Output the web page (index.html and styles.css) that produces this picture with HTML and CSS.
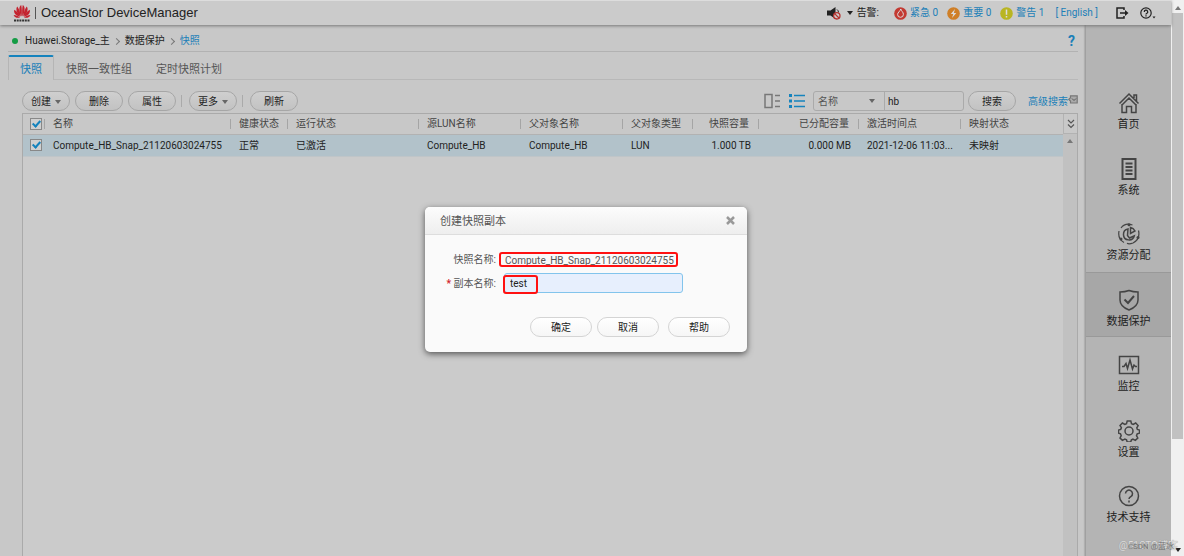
FILE: index.html
```html
<!DOCTYPE html>
<html lang="zh-CN">
<head>
<meta charset="utf-8">
<title>OceanStor DeviceManager</title>
<link rel="stylesheet" href="styles.css">
</head>
<body>
<div class="window">
  <div class="app">
    <header class="topbar">
      <svg class="logo" viewBox="0 0 18 18" aria-label="HUAWEI">
        <g fill="#c4232f">
          <path d="M8.6 12.5C5.8 8 5.6 2.4 8.2 1c.7 2.600 .9 8 .4 11.500z"/>
          <path d="M9.400 12.500C12.200 8 12.400 2.400 9.800 1c-.7 2.600-.9 8-.4 11.500z"/>
          <path d="M7.800 12.500C3.600 9.600 2.300 5 4.300 2.600 6.300 5.500 7.500 9 7.800 12.500z"/>
          <path d="M10.200 12.500c4.200-2.900 5.500-7.500 3.500-9.900-2 2.900-3.200 6.400-3.500 9.900z"/>
          <path d="M7.200 12.800C3 12 .4 9 1.200 5.800c2.700 1.600 4.800 4 6 7z"/>
          <path d="M10.800 12.800c4.200-.8 6.800-3.800 6-7-2.700 1.600-4.800 4-6 7z"/>
          <path d="M7 13.500c-3 .9-5.600 0-6.400-2.500 2.400.2 4.600 1 6.400 2.500z"/>
          <path d="M11 13.500c3 .9 5.600 0 6.400-2.500-2.400.2-4.600 1-6.400 2.500z"/>
        </g>
        <path d="M1 16.500h16" stroke="#333" stroke-width="2" stroke-dasharray="2 .7"/>
      </svg>
      <h1 class="brand">OceanStor DeviceManager</h1>
      <div class="alarms">
        <svg class="i-sound" viewBox="0 0 14 14"><path d="M0 4.500h3.500L8.500 1v12L3.500 9.500H0z" fill="#222"/><path d="M10 3.500q1.500 1 1.500 3" fill="none" stroke="#222"/><circle cx="9.800" cy="9.800" r="3.200" fill="#ccc" stroke="#b5332f" stroke-width="1.300"/><path d="M7.600 7.600l4.400 4.400" stroke="#b5332f" stroke-width="1.300"/></svg>
        <span class="caret dark"></span>
        <span class="alarm-label">告警:</span>
        <a class="alarm" href="#"><svg viewBox="0 0 13 13"><circle cx="6.500" cy="6.500" r="6.300" fill="#c33a32"/><path d="M6.800 2c.3 2 2.600 3 2.600 5.400a2.900 2.900 0 0 1-5.800 0C3.600 5.500 6 4.500 6.800 2z" fill="none" stroke="#ddd"/></svg>紧急 0</a>
        <a class="alarm" href="#"><svg viewBox="0 0 13 13"><circle cx="6.500" cy="6.500" r="6.300" fill="#cf7f27"/><path d="M8 2L3.800 7h2.500L5 11l4.300-5H6.800z" fill="#ddd"/></svg>重要 0</a>
        <a class="alarm" href="#"><svg viewBox="0 0 13 13"><circle cx="6.500" cy="6.500" r="6.300" fill="#b9b522"/><path d="M6.500 2.500v5.300M6.500 9v1.500" stroke="#ddd" stroke-width="1.500"/></svg>警告 1</a>
        <a class="lang" href="#">[ English ]</a>
        <button class="icon-btn" aria-label="退出"><svg viewBox="0 0 13 12"><path d="M8 3V1H1v10h7V9M4 6h7" fill="none" stroke="#222" stroke-width="1.500"/><path d="M9 3l3.500 3L9 9z" fill="#222"/></svg></button>
        <button class="icon-btn help-btn" aria-label="帮助"><svg viewBox="0 0 16 12"><circle cx="6" cy="6" r="5.200" fill="none" stroke="#222" stroke-width="1.200"/><path d="M4.300 5a1.700 1.700 0 1 1 2.600 1.300Q6 6.800 6 7.600M6 8.300v1.300" fill="none" stroke="#222" stroke-width="1.300"/><path d="M12.500 9.500h3L14 11.500z" fill="#222"/></svg></button>
      </div>
    </header>
    <div class="body">
      <main class="main">
        <nav class="crumbs">
          <span class="dot"></span><span>Huawei.Storage_主</span><i class="chev"></i><span>数据保护</span><i class="chev"></i><a href="#">快照</a>
          <a class="help" href="#">?</a>
        </nav>
        <nav class="tabs"><a class="tab active" href="#">快照</a><a class="tab" href="#">快照一致性组</a><a class="tab" href="#">定时快照计划</a></nav>
        <div class="toolbar">
          <button class="pill">创建<span class="caret"></span></button>
          <button class="pill">删除</button>
          <button class="pill">属性</button>
          <span class="sep"></span>
          <button class="pill">更多<span class="caret"></span></button>
          <span class="sep"></span>
          <button class="pill">刷新</button>
          <div class="search">
            <button class="icon-btn" aria-label="分栏"><svg class="i-view" viewBox="0 0 16 16"><path d="M1 1.500h7v13H1zM11 2.500h5M11 8h5M11 13.500h5" fill="none" stroke="#777" stroke-width="1.500"/></svg></button>
            <button class="icon-btn list" aria-label="列表"><svg class="i-view" viewBox="0 0 16 16"><path d="M0 2.500h3M0 8h3M0 13.500h3" stroke="#1583bd" stroke-width="3"/><path d="M5 2.500h11M5 8h11M5 13.500h11" stroke="#1583bd" stroke-width="1.500"/></svg></button>
            <div class="combo"><select aria-label="搜索字段"><option>名称</option></select><span class="caret"></span><input type="text" value="hb" aria-label="关键字"></div>
            <button class="pill">搜索</button>
            <a class="adv" href="#">高级搜索<svg viewBox="0 0 10 9"><path d="M2.500 .8h6.700v7.200H2.500V6L.7 4.400l1.800-1.600z" fill="#aaa" stroke="#777" stroke-width="1.200"/><path d="M4 3.500l2 2 2-2" fill="none" stroke="#555"/></svg></a>
          </div>
        </div>
        <div class="grid">
          <table>
            <colgroup><col class="c-check"><col class="c-name"><col class="c-health"><col class="c-run"><col class="c-lun"><col class="c-lun"><col class="c-type"><col class="c-cap"><col class="c-used"><col class="c-time"><col class="c-map"></colgroup>
            <thead><tr><th><input type="checkbox" checked aria-label="全选"></th><th>名称</th><th>健康状态</th><th>运行状态</th><th>源LUN名称</th><th>父对象名称</th><th>父对象类型</th><th class="num">快照容量</th><th class="num">已分配容量</th><th>激活时间点</th><th>映射状态</th></tr></thead>
            <tbody><tr><td><input type="checkbox" checked aria-label="选择"></td><td>Compute_HB_Snap_21120603024755</td><td>正常</td><td>已激活</td><td>Compute_HB</td><td>Compute_HB</td><td>LUN</td><td class="num">1.000 TB</td><td class="num">0.000 MB</td><td>2021-12-06 11:03...</td><td>未映射</td></tr></tbody>
          </table>
          <div class="gutter"><button class="cols icon-btn" aria-label="选择列"><svg viewBox="0 0 8 10"><path d="M1 1l3 3 3-3M1 5.500l3 3 3-3" fill="none" stroke="#555" stroke-width="1.200"/></svg></button><span class="caret up"></span></div>
        </div>
      </main>
      <nav class="side">
        <a class="item" href="#"><svg viewBox="0 0 22 22"><path d="M1.500 11.500L11 2l9.500 9.500M16 6V3h2.500v6M4 12v8.500h4.500v-6h5v6H18V12M4 13l7-7 7 7" /></svg>首页</a>
        <a class="item" href="#"><svg viewBox="0 0 22 22"><path d="M4.500 1h13v20h-13zM7.500 5.500h7M7.500 9h7M7.500 12.500h7M7.500 16h7" stroke-width="2"/></svg>系统</a>
        <a class="item" href="#"><svg viewBox="0 0 22 22"><path d="M10 6a5.500 5.500 0 1 0 6.300 6.800L11.500 15 9.500 12.500z M12.500 4.500v6l4.500-2.500q-1.500-3-4.500-3.500z"/><path d="M14.500 2Q7-.5 3 5M1 8q-1.500 8 5 11.500M20.500 7.500q2 8.500-5.500 12.500-4 1.500-6 .3" stroke-width="1.200"/><g fill="#444" stroke="none"><circle cx="11" cy="1.800" r="1.500"/><circle cx="3" cy="16" r="1.500"/><circle cx="20" cy="14.500" r="1.500"/></g></svg>资源分配</a>
        <a class="item active" href="#"><svg viewBox="0 0 22 22"><path d="M11 1.500Q15 3 20 3v8q0 6.500-9 10Q2 17.500 2 11V3q5 0 9-1.500z"/><path d="M6.500 10.500l3.500 3.500 6-7" stroke-width="2"/></svg>数据保护</a>
        <a class="item" href="#"><svg viewBox="0 0 22 22"><path d="M1.500 2.500h19v17h-19zM4 12.500h2l2-3 1.500 5L12 6l2.500 9 1.500-4 1.500 1.500H19"/></svg>监控</a>
        <a class="item" href="#"><svg viewBox="0 0 22 22"><circle cx="11" cy="11" r="4"/><path d="M9.200 1h3.600l.7 2.600 1.700.8 2.500-1.400 2.400 2.500-1.300 2.400.6 1.600 2.100.6v3l-2.300.8-.7 1.700 1.300 2.400-2.500 2.400-2.400-1.200-1.500.7-.7 2.100H9.200l-.7-2.200-1.600-.7-2.500 1.300L2 18l1.200-2.400-.7-1.700-2-.7v-3.100l2.200-.7.7-1.700L2 5.500 4.400 3l2.400 1.400 1.700-.8z"/></svg>设置</a>
        <a class="item" href="#"><svg viewBox="0 0 22 22"><circle cx="11" cy="11" r="9.500"/><path d="M7.500 8.500a3.500 3.500 0 1 1 5.500 3Q11 12.500 11 14M11 15.500v2"/></svg>技术支持</a>
      </nav>
    </div>
  </div>
  <div class="scroll"><span class="caret up"></span><div class="thumb"></div><span class="caret dark"></span></div>
</div>
<div class="watermark">@51CTO博客</div>
<div class="watermark second">CSDN @蓝冰</div>
<div class="overlay">
  <form class="dialog" role="dialog" aria-labelledby="dlg-title">
    <div class="dlg-head"><h2 id="dlg-title">创建快照副本</h2><button type="button" class="icon-btn" aria-label="关闭"><svg viewBox="0 0 9 9"><path d="M1 1l7 7M8 1L1 8" stroke="#999" stroke-width="2.500"/></svg></button></div>
    <div class="dlg-body">
      <div class="row"><span class="lbl">快照名称:</span><div class="field"><output class="mark snap">Compute_HB_Snap_21120603024755</output></div></div>
      <div class="row second"><label class="lbl" for="copy"><b>*</b> 副本名称:</label><div class="field copy"><input id="copy" type="text" value="test"><span class="mark ring"></span></div></div>
    </div>
    <div class="actions"><button type="button" class="pill">确定</button><button type="button" class="pill">取消</button><button type="button" class="pill last">帮助</button></div>
  </form>
</div>
</body>
</html>
```
FILE: styles.css
```css
* { box-sizing: border-box; }
body { margin: 0; font: 10px/14px Roboto, "Noto Sans CJK SC", sans-serif; color: #222; background: #c8c8c8; overflow: hidden; }
a { color: #1b7fb8; text-decoration: none; }
h1, h2 { margin: 0; font-weight: 400; }
button, input, select { font: inherit; color: inherit; }
.window { display: flex; height: 100vh; }
.app { flex: 1; min-width: 0; display: flex; flex-direction: column; }
.topbar { display: flex; align-items: center; height: 25px; padding: 0 15px 0 13px; background: #cbcbcb; border-top: 1px solid #ddd; box-shadow: 0 1px 3px #777; position: relative; }
.logo { width: 18px; height: 18px; }
.brand { margin-left: 4px; padding-left: 5px; border-left: 1px solid #555; font: 13px/12px "Liberation Sans", sans-serif; color: #222; }
.alarms { margin-left: auto; display: flex; align-items: center; }
.i-sound { width: 14px; height: 14px; margin-right: 6px; }
.caret { display: inline-block; width: 0; height: 0; border: 3px solid transparent; border-top: 4px solid #666; border-bottom: 0; }
.caret.dark { border-top-color: #222; }
.caret.up { border-top: 0; border-bottom: 4px solid #777; }
.alarm-label { margin: 0 15px 0 4px; }
.alarm { display: flex; align-items: center; gap: 3px; margin-right: 9px; }
.alarm svg { width: 13px; height: 13px; }
.lang { margin: 0 18px 0 2px; }
.icon-btn { display: flex; padding: 0; border: 0; background: none; }
.icon-btn svg { width: 13px; height: 12px; }
.help-btn { margin-left: 11px; }
.help-btn svg { width: 16px; }
.body { flex: 1; display: flex; min-height: 0; }
.main { flex: 1; min-width: 0; padding: 0 7px 0 8px; display: flex; flex-direction: column; }
.crumbs { display: flex; align-items: center; height: 27px; padding: 6px 3px 0 4px; border-bottom: 1px solid #b2b2b2; }
.dot { width: 6px; height: 6px; border-radius: 50%; background: #149c45; margin-right: 7px; }
.chev { width: 5px; height: 5px; margin: 0 6px 0 4px; border: solid #777; border-width: 1px 1px 0 0; transform: rotate(45deg); }
.help { margin-left: auto; font-size: 14px; font-weight: 700; }
.tabs { display: flex; margin-top: 3px; height: 25px; border-bottom: 1px solid #b8b8b8; font-size: 11px; line-height: 30px; }
.tab { padding: 0 12px; color: #555; }
.tab.active { height: 25px; padding: 0 11px; border: 1px solid #b5b5b5; border-top: 2px solid #1583bd; border-bottom: 0; border-radius: 2px 2px 0 0; color: #1b7fb8; background: #c8c8c8; line-height: 26px; }
.toolbar { display: flex; align-items: center; height: 32px; padding: 10px 0 0 14px; }
.pill { width: 48px; height: 20px; margin-right: 5px; padding: 1px 0 0; border: 1px solid #a6a6a6; border-radius: 10px; background: linear-gradient(#cfcfcf, #c2c2c2); line-height: 18px; }
.pill .caret { margin: 0 0 1px 4px; }
.sep { width: 1px; height: 12px; background: #aaa; margin: 0 7px 0 0; }
.search { margin-left: auto; display: flex; align-items: center; }
.i-view.i-view { width: 16px; height: 16px; }
.list { margin: 0 8px 0 9px; }
.combo { position: relative; display: flex; width: 151px; height: 20px; margin-right: 4px; border: 1px solid #aaa; border-radius: 3px; }
.combo select { appearance: none; width: 70px; padding: 1px 4px 0; border: 0; background: none; color: #555; }
.combo .caret { position: absolute; left: 55px; top: 7px; }
.combo input { flex: 1; min-width: 0; border: 0; border-left: 1px solid #aaa; background: none; padding: 1px 3px 0; }
.adv { display: flex; align-items: center; margin-left: 7px; padding-top: 1px; }
.adv svg { width: 10px; height: 9px; margin-top: -4px; }
.grid { flex: 1; margin: 1px 0 0 14px; display: flex; border: solid #aaa; border-width: 1px 1px 0; background: #cbcbcb; }
table { flex: 1; min-width: 0; width: 100%; table-layout: fixed; border-collapse: collapse; align-self: flex-start; }
th, td { padding: 1px 0 0 8px; text-align: left; font-weight: 400; white-space: nowrap; overflow: hidden; }
th { height: 20px; color: #444; background: linear-gradient(90deg, #a5a5a5, #a5a5a5) right center / 1px 10px no-repeat; }
th:last-child { background: none; }
thead tr { border-bottom: 1px solid #b2b2b2; background: #c8c8c8; }
td { height: 22px; background: #b2c2ca; }
tbody tr { border-bottom: 1px solid #bfc5c8; }
.num { text-align: right; padding-right: 10px; }
td.num { padding-right: 8px; }
th:first-child, td:first-child { padding: 0 0 0 7px; }
[type=checkbox] { appearance: none; display: block; width: 12px; height: 12px; margin: 0; border: 1px solid #888; background: #d0d0d0; }
[type=checkbox]:checked::after { content: ""; display: block; width: 5px; height: 8px; margin: 0 0 0 3px; border: solid #1583bd; border-width: 0 2px 2px 0; box-sizing: border-box; transform: rotate(42deg); }
.c-check { width: 22px; } .c-name { width: 186px; } .c-health { width: 57px; } .c-run { width: 131px; } .c-lun { width: 102px; } .c-type { width: 70px; } .c-cap { width: 66px; } .c-used { width: 100px; } .c-time { width: 102px; }
.gutter { width: 14px; background: #c1c1c1; display: flex; flex-direction: column; align-items: center; gap: 5px; }
.cols { width: 14px; height: 20px; align-items: center; justify-content: center; border: solid #b2b2b2; border-width: 0 0 1px 1px; background: #c8c8c8; }
.cols svg { width: 8px; height: 10px; }
.side { width: 86px; display: flex; flex-direction: column; padding: 50px 0 22px; background: #b4b4b4; border-left: 1px solid #a0a0a0; box-shadow: -1px 0 1px #b0b0b0; }
.item { flex: 1; display: flex; flex-direction: column; align-items: center; gap: 2px; padding-top: 16px; font-size: 11px; line-height: 18px; color: #222; border: solid transparent; border-width: 1px 0; }
.item svg { width: 22px; height: 22px; fill: none; stroke: #444; stroke-width: 1.500; }
.item.active { background: #a7a7a7; border-color: #999; }
.scroll { width: 13px; background: #f0f0f0; display: flex; flex-direction: column; align-items: center; padding: 6px 0 4px; }
.thumb { width: 11px; height: 426px; margin: 3px 0 auto; background: #c1c1c1; }
.watermark { position: absolute; right: 6px; bottom: 3px; color: #dedede; font-size: 10px; text-shadow: 0 0 1px #888; }
.watermark.second { right: 10px; bottom: 2px; font-size: 8px; color: #777; text-shadow: none; }
.overlay { position: absolute; inset: 0; display: flex; justify-content: center; align-items: flex-start; padding: 207px 12px 0 0; }
.dialog { width: 322px; border-radius: 5px; background: #fafafa; box-shadow: 0 2px 6px #555; }
.dlg-head { display: flex; align-items: center; justify-content: space-between; height: 28px; padding: 0 12px 0 15px; border-bottom: 1px solid #ddd; border-radius: 5px 5px 0 0; background: linear-gradient(#fcfcfc, #eee); color: #555; }
.dlg-head h2 { font-size: 11px; line-height: 28px; padding-top: 3px; }
.dlg-head .icon-btn svg { width: 9px; height: 9px; }
.dlg-body { padding: 13px 0 0; }
.row { display: flex; align-items: center; height: 22px; color: #555; }
.row.second { margin-top: 2px; }
.lbl { width: 71px; padding-top: 2px; text-align: right; }
.lbl b { color: #d2232a; }
.field { position: relative; }
.mark { border: 2px solid #f11; border-radius: 3px; }
.snap { display: block; width: 179px; height: 15px; margin-left: 3px; padding: 0 4px; overflow: hidden; line-height: 14px; }
.copy { margin-left: 8px; }
.copy input { display: block; width: 179px; height: 20px; border: 1px solid #82c4ec; border-radius: 3px; background: #e7effd; padding: 1px 5px 0; color: #222; }
.ring { position: absolute; left: -1px; top: 2px; width: 35px; height: 19px; }
.actions { display: flex; justify-content: flex-end; padding: 23px 17px 15px 0; }
.dialog .pill { width: 62px; margin: 0 0 0 5px; border-color: #d4d4d4; background: linear-gradient(#fff, #f6f6f6); }
.dialog .pill.last { margin-left: 9px; }
```
